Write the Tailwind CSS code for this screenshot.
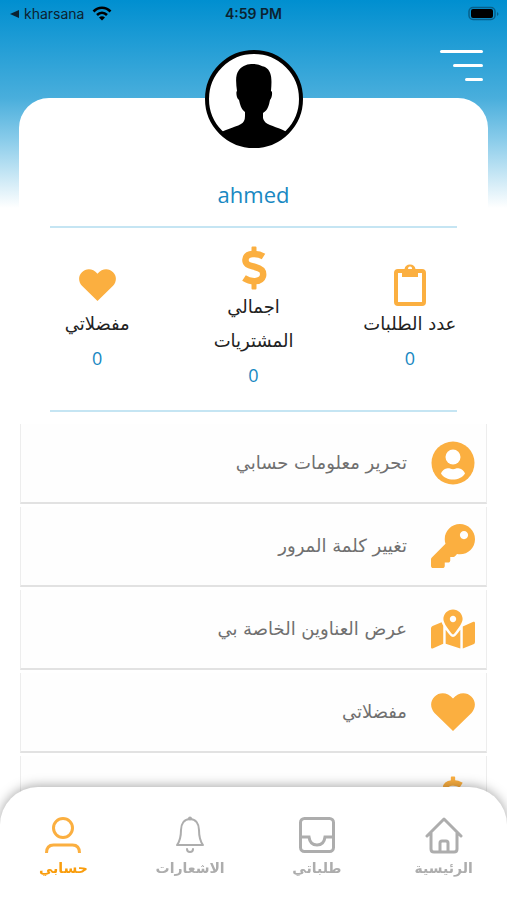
<!DOCTYPE html>
<html lang="ar" dir="rtl">
<head>
<meta charset="utf-8">
<meta name="viewport" content="width=device-width, initial-scale=1">
<title>حسابي</title>
<script src="https://cdn.jsdelivr.net/npm/@tailwindcss/browser@4"></script>
</head>
<body class="flex h-screen flex-col overflow-hidden bg-white bg-[linear-gradient(#008fd0_0px,#49aedc_98px,#8accea_140px,#ffffff_208px)] font-['DejaVu_Sans',sans-serif] text-[#222222]">
<svg class="hidden" aria-hidden="true">
  <symbol id="heart" viewBox="0 0 44 38"><path d="M22 38L3.500 20C-1 15-1 8 3.500 3.700C8.500-1.200 16.500-1 22 5.500C27.500-1 35.500-1.200 40.500 3.700C45 8 45 15 40.500 20Z"/></symbol>
  <symbol id="dollar" viewBox="0 0 26 44"><path d="M10.500 1.500q0-1 1-1h3q1 0 1 1V8h-5zM10.500 36h5v6.500q0 1-1 1h-3q-1 0-1-1z"/><path d="M22.500 10.500C17 7 5 6.500 4.500 13.500C4 19 9 19.500 14 21C20 22.500 23 24.500 22 30C20 37 9 36 3 32" fill="none" stroke="currentColor" stroke-width="6.500"/></symbol>
</svg>

<div dir="ltr" class="grid h-7 shrink-0 grid-cols-3 items-center px-2 font-[Inter,sans-serif] text-sm text-[#0b2230]">
  <div class="flex items-center gap-1">
    <svg class="h-2 w-3" viewBox="0 0 12 8" fill="currentColor" aria-hidden="true"><path d="M2 4l9-4v8z"/></svg>
    <span>kharsana</span>
    <svg class="ml-1 h-4 w-5" viewBox="0 0 20 16" fill="none" stroke="#000" stroke-width="2.600" aria-hidden="true"><path d="M1.500 5.500C6.500 .5 13.500 .5 18.500 5.500M5 9c3-3 7-3 10 0"/><path d="M10 14.500l-3-3c1.800-1.600 4.200-1.600 6 0z" fill="#000" stroke="none"/></svg>
  </div>
  <div class="text-center font-semibold">4:59 PM</div>
  <svg class="h-4 w-8 justify-self-end" viewBox="0 0 32 16" aria-hidden="true"><rect x="2" y="1.500" width="26" height="12" rx="4" fill="none" stroke="#07608b" stroke-width="1.500"/><rect x="4" y="3" width="22" height="9" rx="2" fill="#000"/><path d="M30 6v4c2-1 2-3 0-4z" fill="#07608b"/></svg>
</div>

<header class="flex h-[70px] shrink-0 items-start px-6 pt-5">
  <button type="button" aria-label="القائمة" class="flex w-[43px] flex-col gap-[11px] pt-[2px]">
    <span class="h-[3px] w-full rounded-full bg-white"></span>
    <span class="h-[3px] w-[30px] rounded-full bg-white"></span>
    <span class="h-[3px] w-[18px] rounded-full bg-white"></span>
  </button>
</header>

<main class="mx-[19px] flex shrink-0 flex-col rounded-t-[30px] bg-white">
  <svg class="-mt-12 size-[98px] self-center" viewBox="0 0 98 98" role="img" aria-label="ahmed">
    <clipPath id="face"><circle cx="49" cy="49" r="48"/></clipPath>
    <circle cx="49" cy="49" r="47" fill="#fff"/>
    <path clip-path="url(#face)" d="M10 86C19 79 29 78 36 74Q40 72 40 66V62C36 59 35 54 34 50C31 48 31 41 32 41C31 33 30 25 34 20C38 15 43 14 48 14C54 14 56 16 60 17C67 21 67 29 66 41C68 41 67 48 65 50C64 55 63 60 58 63V68Q59 73 65 75C72 78 82 80 88 87L80 98H16Z"/>
    <circle cx="49" cy="49" r="47" fill="none" stroke="#000" stroke-width="4"/>
  </svg>
  <h1 class="mt-[30px] text-center font-['Open_Sans',sans-serif] text-[22px] leading-8 text-[#1888c2]">ahmed</h1>

  <hr class="mx-[31px] mt-4 border-t-2 border-[#c5e5f3]">
  <section class="grid h-[182px] grid-cols-3 items-center text-center text-lg">
    <div class="flex flex-col items-center">
      <svg class="h-[44px] w-[34px] text-[#fbaf40]" viewBox="0 0 34 44" aria-hidden="true"><rect x="3" y="8" width="28" height="33" rx="2" fill="none" stroke="currentColor" stroke-width="4"/><path fill="currentColor" fill-rule="evenodd" d="M9 6h2.500a5.600 5.600 0 0 1 11 0H25v8H9zM17 3.500a2 2 0 1 0 .1 0z"/></svg>
      <h2 class="leading-[34px] whitespace-nowrap">عدد الطلبات</h2>
      <p class="font-['Open_Sans',sans-serif] leading-[34px] text-[#1888c2]">0</p>
    </div>
    <div class="flex flex-col items-center">
      <svg class="h-[44px] w-[26px] fill-current text-[#fbaf40]" aria-hidden="true"><use href="#dollar"/></svg>
      <h2 class="w-24 leading-[34px]">اجمالي المشتريات</h2>
      <p class="font-['Open_Sans',sans-serif] leading-[34px] text-[#1888c2]">0</p>
    </div>
    <div class="flex flex-col items-center">
      <svg class="h-[44px] w-[37px] fill-[#fbaf40]" aria-hidden="true"><use href="#heart"/></svg>
      <h2 class="leading-[34px] whitespace-nowrap">مفضلاتي</h2>
      <p class="font-['Open_Sans',sans-serif] leading-[34px] text-[#1888c2]">0</p>
    </div>
  </section>
  <hr class="mx-[31px] border-t-2 border-[#c5e5f3]">

  <ul class="mx-px mt-3 flex flex-col gap-[3px] text-lg text-[#707070]">
    <li><a href="#" class="flex h-20 items-center gap-6 border-x border-b-2 border-x-[#ededed] border-b-[#e2e2e2] bg-[#fefefe] px-[11px]">
      <svg class="size-[44px]" viewBox="0 0 44 44" aria-hidden="true"><circle cx="22" cy="22" r="21.500" fill="#fbaf40"/><circle cx="22" cy="16" r="7.500" fill="#fff"/><path d="M10 32.500c2-5 7-5.500 9-5 2 1 4 1 6 0 2-.5 7 0 9 5-5 8-19 8-24 0z" fill="#fff"/></svg>
      تحرير معلومات حسابي</a></li>
    <li><a href="#" class="flex h-20 items-center gap-6 border-x border-b-2 border-x-[#ededed] border-b-[#e2e2e2] bg-[#fefefe] px-[11px]">
      <svg class="size-[44px] fill-[#fbaf40]" viewBox="0 0 512 512" aria-hidden="true"><path d="M512 176c0 97.200-78.800 176-176 176-11.200 0-22.200-1.100-32.800-3.100l-24 27A24 24 0 0 1 261.200 384H224v40c0 13.300-10.700 24-24 24h-40v40c0 13.300-10.700 24-24 24H24c-13.300 0-24-10.700-24-24v-78.100c0-6.400 2.500-12.500 7-17l161.800-161.800C163 213.800 160 195.300 160 176 160 78.800 238.800 0 336 0c97.500 0 176 78.500 176 176zM336 128c0 26.500 21.500 48 48 48s48-21.500 48-48-21.500-48-48-48-48 21.500-48 48z"/></svg>
      تغيير كلمة المرور</a></li>
    <li><a href="#" class="flex h-20 items-center gap-6 border-x border-b-2 border-x-[#ededed] border-b-[#e2e2e2] bg-[#fefefe] px-[11px]">
      <svg class="size-[44px] fill-[#fbaf40]" viewBox="0 0 576 512" aria-hidden="true"><path d="M288 0c-69.600 0-126 56.400-126 126 0 56.300 82.400 158.800 113.900 196 6.400 7.500 17.800 7.500 24.200 0C331.600 284.800 414 182.300 414 126 414 56.400 357.600 0 288 0zm0 168c-23.200 0-42-18.800-42-42s18.800-42 42-42 42 18.800 42 42-18.800 42-42 42zM20.100 216A32 32 0 0 0 0 245.700v250.300c0 11.300 11.400 19.100 21.900 14.900L160 448V214.900c-8.800-16-16.100-31.500-21.300-46.400L20.100 216zM288 359.700c-14.100 0-27.400-6.200-36.500-17-19.700-23.200-40.600-49.600-59.500-76.700v182l192 64V266c-18.900 27.100-39.800 53.500-59.500 76.700-9.100 10.800-22.400 17-36.500 17zM554.100 161.200L416 224v288l139.900-56A32 32 0 0 0 576 426.300V176c0-11.300-11.400-19.100-21.900-14.800z"/></svg>
      عرض العناوين الخاصة بي</a></li>
    <li><a href="#" class="flex h-20 items-center gap-6 border-x border-b-2 border-x-[#ededed] border-b-[#e2e2e2] bg-[#fefefe] px-[11px]">
      <svg class="size-[44px] fill-[#fbaf40]" aria-hidden="true"><use href="#heart"/></svg>
      مفضلاتي</a></li>
    <li><a href="#" aria-label="المشتريات" class="flex h-20 items-center border-x border-b-2 border-x-[#ededed] border-b-[#e2e2e2] bg-[#fefefe] px-[11px]">
      <svg class="h-[38px] w-[44px] fill-current text-[#fbaf40]" aria-hidden="true"><use href="#dollar"/></svg></a></li>
  </ul>
</main>

<nav class="fixed inset-x-0 bottom-0 grid h-[113px] grid-cols-4 rounded-t-[38px] bg-white pt-[29px] text-sm font-bold text-[#adadad] shadow-[0_-1px_12px_rgba(0,0,0,0.35)]">
  <a href="#" class="flex flex-col items-center gap-1">
    <svg class="size-[38px]" viewBox="0 0 38 38" fill="none" stroke="currentColor" stroke-width="3" stroke-linecap="round" stroke-linejoin="round" aria-hidden="true"><path d="M2 20L19 3l17 17M6 17v16q0 3 3 3h20q3 0 3-3V17M15 36V27q0-2 2-2h4q2 0 2 2v9"/></svg>
    الرئيسية</a>
  <a href="#" class="flex flex-col items-center gap-1">
    <svg class="size-[38px]" viewBox="0 0 38 38" fill="none" stroke="currentColor" stroke-width="3" aria-hidden="true"><rect x="2.500" y="2.500" width="33" height="33" rx="4"/><path d="M2 21h9q1 8 8 8t8-8h9"/></svg>
    طلباتي</a>
  <a href="#" class="flex flex-col items-center gap-1">
    <svg class="size-[38px]" viewBox="0 0 38 38" fill="none" stroke="currentColor" stroke-width="2" stroke-linecap="round" stroke-linejoin="round" aria-hidden="true"><path d="M19 3c-6 0-9 5-9 11 0 8-1 11-4 15h26c-3-4-4-7-4-15 0-6-3-11-9-11zM16 33q0 3 3 3t3-3"/><circle cx="19" cy="2.500" r="1"/></svg>
    الاشعارات</a>
  <a href="#" aria-current="page" class="flex flex-col items-center gap-1 text-[#f99d0d]">
    <svg class="size-[38px]" viewBox="0 0 38 38" fill="none" stroke="#fbaf40" stroke-width="3" aria-hidden="true"><circle cx="19" cy="12" r="9.500"/><path d="M2.500 37c0-5 2-8 7-8h19c5 0 7 3 7 8"/></svg>
    حسابي</a>
</nav>
</body>
</html>
